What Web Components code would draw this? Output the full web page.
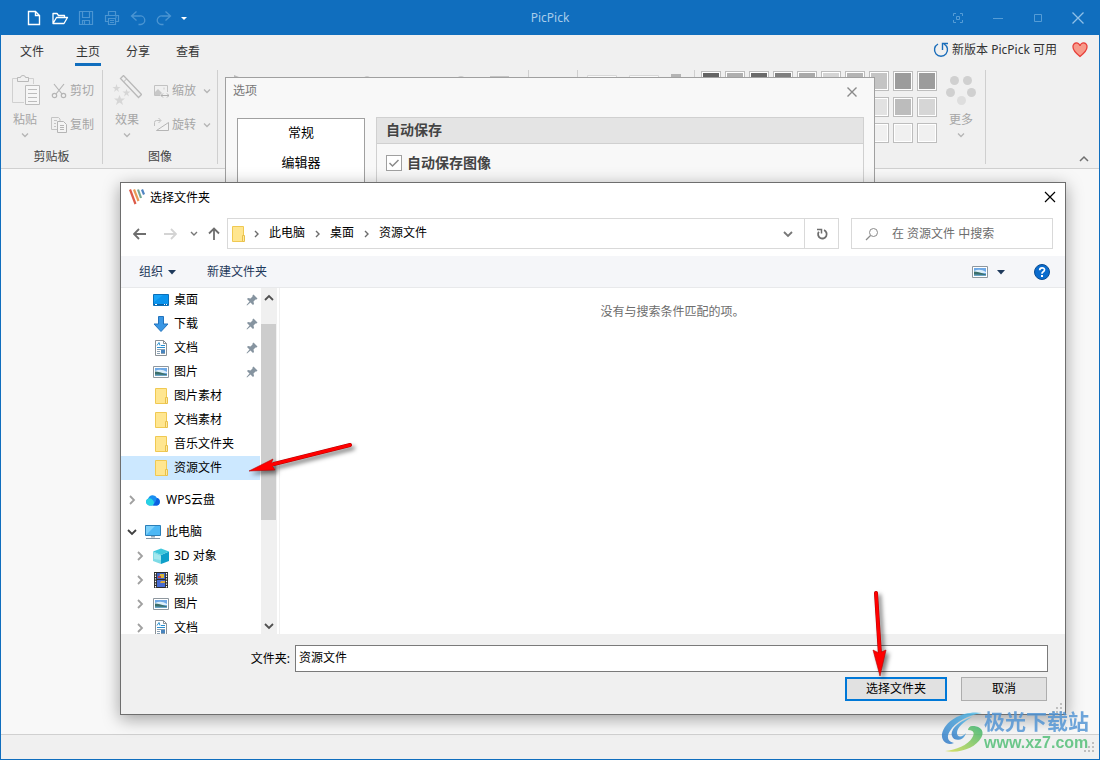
<!DOCTYPE html>
<html lang="zh-CN">
<head>
<meta charset="utf-8">
<title>PicPick</title>
<style>
  body { margin: 0; font: 12px/18px "Noto Sans", "Noto Sans CJK SC", sans-serif; color: #000; background: #f8f8f8; }
</style>
</head>
<body>
<picpick-app></picpick-app>
<script>
const BASE = `*{box-sizing:border-box} button{font:inherit;color:inherit;background:none;border:0;padding:0;margin:0} button:focus,input:focus{outline:none}`;
function component(name, css, html) {
  const tpl = document.createElement('template');
  tpl.innerHTML = `<style>${BASE}${css}</style>${html}`;
  customElements.define(name, class extends HTMLElement {
    constructor() {
      super();
      this.attachShadow({ mode: 'open' }).append(tpl.content.cloneNode(true));
    }
  });
}

/* Icon library: [width, height, svg body] */
const PICTURE = '<path d="M.5 2.5h15v11H.5z" fill="#fff" stroke="#8e979e"/><path d="M2 4h12v8H2z" fill="#6fa9e6"/><path d="M2 7q6-3 12 1v1H2z" fill="#dceefa"/><path d="M2 7.500q4 0 12 3v1.500H2z" fill="#3b6f6b"/><path d="M2 10.500q6 0 12 .5v1H2z" fill="#6aa5c8"/>';
const ICONS = {
  'new': [16,16,'<path d="M2.500 1.500h7l4 4v9h-11z M9.500 1.500v4h4" stroke="#fff" stroke-width="1.400" fill="none"/>'],
  'open': [18,16,'<path d="M2 13.500V3.500h4l1.500 2h6v2.500M2 13.500l3.500-6h11l-3.500 6z" stroke="#fff" stroke-width="1.300" fill="none" stroke-linejoin="round"/>'],
  'save': [16,16,'<path d="M1.500 1.500h13v13h-13z M4.500 1.500v6h7v-6 M4.500 14.500v-4h7v4M6.500 11v3" stroke="#4b95d2" stroke-width="1.200" fill="none"/>'],
  'print': [16,16,'<path d="M4.500 5V1.500h7V5M4.500 11.500h-3v-6h13v6h-3M4.500 8.500h7v6h-7zM6 10.500h4M6 12.500h4M11 7h2" stroke="#4b95d2" stroke-width="1.200" fill="none"/>'],
  'undo': [16,16,'<path d="M6.500 1.500l-5 4.500 5 4.500M1.500 6h8.500a4 4 0 0 1 1 8.500H8.500" stroke="#4b95d2" stroke-width="1.300" fill="none"/>'],
  'redo': [16,16,'<path d="M9.500 1.500l5 4.500-5 4.500M14.500 6H6a4 4 0 0 0-1 8.500h2.500" stroke="#4b95d2" stroke-width="1.300" fill="none"/>'],
  'caret-white': [8,8,'<path d="M1 3h6L4 6z" fill="#fff"/>'],
  'caret-navy': [8,8,'<path d="M0 2h8L4 6.500z" fill="#1e395b"/>'],
  'focus': [12,12,'<path d="M1.500 4V1.500H4M8 1.500h2.500V4M10.500 8v2.500H8M4 10.500H1.500V8" stroke="#559cd6" fill="none"/><path d="M4.500 4.500h3v3h-3z" stroke="#559cd6" fill="none"/>'],
  'min': [12,12,'<path d="M1 6.500h10" stroke="#559cd6"/>'],
  'max': [12,12,'<path d="M2.500 2.500h7v7h-7z" stroke="#559cd6" fill="none"/>'],
  'close-light': [12,12,'<path d="M.5.5l11 11M11.500.5l-11 11" stroke="#8fc0e8" stroke-width="1.300"/>'],
  'close-gray': [12,12,'<path d="M1.500 1.500l9 9M10.500 1.500l-9 9" stroke="#8a8a8a" stroke-width="1.400"/>'],
  'close': [12,12,'<path d="M1 1l10 10M11 1L1 11" stroke="#000" stroke-width="1.200"/>'],
  'update': [16,16,'<path d="M5 2a6.500 6.500 0 1 0 6 0M9.500 8V1.500H15" stroke="#1a6dba" stroke-width="1.400" fill="none"/>'],
  'heart': [16,16,'<path d="M8 14.500C3 10.500 1 8 1 5a3.500 3.500 0 0 1 7-1 3.500 3.500 0 0 1 7 1c0 3-2 5.500-7 9.500z" fill="#f79a8a" stroke="#e8413c" stroke-width="1.300"/>'],
  'paste': [30,30,'<path d="M7 3.500H2.500v24H14M19 3.500h4.500V9" stroke="#d0d0d0" fill="none"/><path d="M7.500 6.500v-4h3q0-2 2.500-2t2.500 2h3v4z" stroke="#b9b9b9" fill="#f0f0f0"/><path d="M15.500 10.500h14v19h-14z" stroke="#bcbcbc" fill="#f6f6f6"/><path d="M18 14.500h9M18 18.500h9M18 22.500h9M18 26.500h9" stroke="#bcbcbc"/>'],
  'effects': [30,30,'<g stroke="#b9b9b9" fill="none"><path d="M8.500 3.500l3-3 18 19-3 3z" stroke-width="1.300"/><path d="M11.500 7l3-3"/></g><path fill="#d6d6d6" d="M4.500 9l1 3h3L6 14l1 3-2.500-2L2 17l1-3L.5 12h3zM14.500 14l1 2.500h3l-2.500 2 1 3-2.500-2-2.500 2 1-3-2.500-2h3zM7.500 20L9 23.500h4L9.800 26l1.200 4-3.500-2.500L4 30l1.200-4L2 23.500h4z"/>'],
  'cut': [16,16,'<g stroke="#b5b5b5" fill="none" stroke-width="1.200"><circle cx="3.500" cy="12.500" r="2.200"/><circle cx="12.500" cy="12.500" r="2.200"/><path d="M3 1l8 10M13 1L5 11"/></g>'],
  'copy': [16,16,'<path d="M7 12.500H.5v-12h7L9 2v2M3 3.500h3M3 6.500h2M3 9.500h2" stroke="#c4c4c4" fill="none"/><path d="M6.500 4.500h6l3 3v8h-9zM9 8.500h4M9 10.500h4M9 12.500h4" stroke="#b5b5b5" fill="#f4f4f4"/>'],
  'resize': [16,16,'<path d="M7 12.500H1.500v-10h13V9" stroke="#c2c2c2" fill="none"/><path d="M2 12V9l3-3 4 4-2 2z" fill="#c8c8c8"/><path d="M10 4.500h2v2h-2z" fill="#ddd"/><path d="M8 12.500h8M10 10.500l-2 2 2 2M14 10.500l2 2-2 2" stroke="#b0b0b0" fill="none"/>'],
  'rotate': [16,16,'<path d="M3.500 13.500h12V5.500z" stroke="#b5b5b5" fill="#f2f2f2"/><path d="M1.500 9V5.500q0-2 2-2h4M5.500 1l2.500 2.500L5.500 6" stroke="#c0c0c0" fill="none"/>'],
  'chevron-small': [8,8,'<path d="M1 2.500l3 3 3-3" stroke="#b5b5b5" fill="none" stroke-width="1.300"/>'],
  'collapse': [12,12,'<path d="M2 8l4-4 4 4" stroke="#6f6f6f" fill="none" stroke-width="1.500"/>'],
  'more-dots': [30,30,'<g fill="#d0d0d0"><circle cx="8.500" cy="5.500" r="4.500"/><circle cx="21.500" cy="5.500" r="4.500"/><circle cx="4.500" cy="17.500" r="4.500"/><circle cx="25.500" cy="17.500" r="4.500"/><circle cx="15.500" cy="25.500" r="4.500" fill="#dedede"/></g>'],
  'picpick': [16,16,'<g stroke-width="2.200"><path d="M1 .5l5.500 14.500" stroke="#dc5a48"/><path d="M5 .5l4.500 11.500" stroke="#e99a55"/><path d="M9 .5l3 8.500" stroke="#74a893"/><path d="M13 .5l2 5" stroke="#4f84c2"/></g>'],
  'back': [14,14,'<path d="M13 7H1.500M6 2L1 7l5 5" stroke="#6e6e6e" fill="none" stroke-width="1.800"/>'],
  'forward': [14,14,'<path d="M1 7h11.500M8 2l5 5-5 5" stroke="#d4d4d4" fill="none" stroke-width="1.800"/>'],
  'up': [14,14,'<path d="M7 13V1.500M2 6.500l5-5 5 5" stroke="#6e6e6e" fill="none" stroke-width="1.800"/>'],
  'down-tiny': [8,8,'<path d="M1 2l3 3 3-3" stroke="#777" fill="none" stroke-width="1.400"/>'],
  'down': [10,10,'<path d="M1 3l4 4 4-4" stroke="#777" fill="none" stroke-width="1.800"/>'],
  'crumb': [8,10,'<path d="M2 2l3 3-3 3" stroke="#6c6c6c" fill="none" stroke-width="1.400"/>'],
  'refresh': [14,14,'<path d="M9 3.200a4.300 4.300 0 1 1-5.200 1.600" stroke="#6e6e6e" fill="none" stroke-width="1.800"/><path d="M2 2.500h4.500v4" stroke="#6e6e6e" fill="none" stroke-width="1.500"/>'],
  'search': [14,14,'<circle cx="8.500" cy="5.500" r="4" stroke="#8a8a8a" fill="none"/><path d="M5.500 8.500L1 13" stroke="#8a8a8a" stroke-width="1.200"/>'],
  'folder': [16,16,'<path d="M2.500.5h11v15h-11z" fill="#ffe690" stroke="#f0c952"/><path d="M12.500 9.500h2v6h-2z" fill="#ffe9a0" stroke="#e8c04a"/>'],
  'desktop': [16,16,'<path d="M.5 2.500h15v11H.5z" fill="#18a4f8" stroke="#0b6fb8"/><path d="M1 10l9-7h5v10H1z" fill="#0a94ee"/><path d="M1 12.500h14" stroke="#0a5fa4"/><path d="M2 12.500h2M11 12.500h1M13 12.500h1" stroke="#fff"/>'],
  'download': [16,16,'<path d="M5.500.5h5V8H15L8 15.500 1 8h4.500z" fill="#3a97e4" stroke="#2273bd"/>'],
  'document': [16,16,'<path d="M2.500.5h8l3 3v12h-11z" fill="#fff" stroke="#8a9196"/><path d="M10.500.5v3h3" fill="none" stroke="#8a9196"/><path d="M4 9.500h8M4 11.500h3M4 13.500h3M8 13.500h4" stroke="#8aa0b2"/><path d="M4 5.500l2-3 1 3M8 5.500h4M4 7.500h8" stroke="#2a8fd0" fill="none"/><path d="M8 10h4v3H8z" fill="#4884bd"/>'],
  'picture': [16,16,PICTURE],
  'pin': [12,12,'<path d="M7.500.5l4 4-1 1h-1L7.500 7.500 8 10l-1 1-2.500-2.500L1 11.500.5 11l3-3.500L1 5l1-1 2.500.5 2-2v-1z" fill="#8694a0"/>'],
  'cloud': [16,16,'<path d="M4 13.500a3.700 3.700 0 0 1-.8-7A4.700 4.700 0 0 1 12 6 3.900 3.900 0 0 1 12 13.500z" fill="#1a8ff2"/><path d="M4 13.500a3.700 3.700 0 0 1-.8-7q3-1 5 2t-1 5z" fill="#27d3e3"/><path d="M8 13.500q3-4 4-7.500A3.900 3.900 0 0 1 12 13.500z" fill="#0b5fe0"/>'],
  'computer': [16,16,'<path d="M.5 1.500h15v10H.5z" fill="#4db8f5" stroke="#2b7fb8"/><path d="M1 11V2h9z" fill="#7cd0fa"/><path d="M6 12h4v1.500H6z" fill="#9aaab8"/><path d="M1 14.500h14" stroke="#8496a6"/>'],
  'cube': [16,16,'<path d="M0 3.500L8 7v9l-8-3z" fill="#7edbe6"/><path d="M16 3.500L8 7v9l8-3z" fill="#0e9fc9"/><path d="M0 3.500L8 .5l8 3L8 7z" fill="#3fc8dc"/><path d="M1 5l7 3v4L1 11z" fill="#a5e8ee"/>'],
  'video': [16,16,'<path d="M1 0h14v16H1z" fill="#2b2b2b"/><path d="M4 1h8v6H4z" fill="#3f63c8"/><path d="M4 8h8v7H4z" fill="#466bd2"/><path d="M7 2h4v4H6z" fill="#d7b83b"/><path d="M5 4h3v2H5z" fill="#c4404a"/><path d="M8 9h4v2H7z" fill="#d8a63a"/><path d="M2.500 1v15M13.500 1v15" stroke="#fff" stroke-width="1.200" stroke-dasharray="1.400 1.200"/>'],
  'tree-closed': [8,12,'<path d="M2 2l4 4-4 4" stroke="#a0a0a0" fill="none" stroke-width="1.800"/>'],
  'tree-open': [10,10,'<path d="M1 3l4 4 4-4" stroke="#404040" fill="none" stroke-width="1.800"/>'],
  'scroll-up': [10,10,'<path d="M1 7l4-4 4 4" stroke="#505050" fill="none" stroke-width="1.800"/>'],
  'scroll-down': [10,10,'<path d="M1 3l4 4 4-4" stroke="#505050" fill="none" stroke-width="1.800"/>'],
  'help': [16,16,'<circle cx="8" cy="8" r="7.500" fill="#0a6cce" stroke="#0b4d92"/><path d="M5.700 6.200q0-2.400 2.400-2.400t2.400 2q0 1.200-1.300 2T8 9.800" stroke="#fff" stroke-width="1.700" fill="none"/><path d="M7 11h2v2H7z" fill="#fff"/>'],
  'grip': [12,12,'<path d="M8 0h2v2H8zM4 4h2v2H4zM8 4h2v2H8zM0 8h2v2H0zM4 8h2v2H4zM8 8h2v2H8z" fill="#bfbfbf"/>']
};
customElements.define('pp-icon', class extends HTMLElement {
  constructor() { super(); this.attachShadow({ mode: 'open' }); }
  connectedCallback() {
    const [w, h, body] = ICONS[this.getAttribute('name')];
    this.shadowRoot.innerHTML = `<style>:host{display:block;flex:none;width:${w}px;height:${h}px}svg{display:block}</style><svg width="${w}" height="${h}" viewBox="0 0 ${w} ${h}" aria-hidden="true">${body}</svg>`;
  }
});
const icon = n => `<pp-icon name="${n}"></pp-icon>`;

component('title-bar', `
  :host{display:grid;grid-template-columns:1fr auto 1fr;align-items:center;height:35px;background:#106ebe;color:#a9cdea}
  .quick{display:flex;padding-left:20px}
  .quick button{width:26px;height:34px;display:grid;place-items:center}
  .quick button:last-child{width:14px}
  .win{display:flex;justify-content:flex-end;padding-right:1px}
  .win button{width:40px;height:34px;display:grid;place-items:center}
`, `<div class="quick">${[['new','新建'],['open','打开'],['save','保存'],['print','打印'],['undo','撤销'],['redo','重做'],['caret-white','自定义']].map(([n,t]) => `<button aria-label="${t}">${icon(n)}</button>`).join('')}</div>
<span><slot></slot></span>
<div class="win">${[['focus','专注'],['min','最小化'],['max','最大化'],['close-light','关闭']].map(([n,t]) => `<button aria-label="${t}">${icon(n)}</button>`).join('')}</div>`);

component('ribbon-tabs', `
  :host{display:flex;height:35px;color:#333}
  nav{display:flex;flex:1;padding-left:6px}
  nav a{display:block;margin:8px 12px 4px;padding:0 1px;line-height:18px;height:23px;color:#333;text-decoration:none;border-bottom:3px solid transparent}
  nav a:first-child{margin-right:18px}
  nav a[aria-current]{border-color:#106ebe}
  .notice{display:flex;align-items:center;gap:3px;padding:0 11px 5px 0}
  .notice span{margin-right:12px}
`, `<nav><a href="#file">文件</a><a href="#home" aria-current="page">主页</a><a href="#share">分享</a><a href="#view">查看</a></nav>
<div class="notice">${icon('update')}<span>新版本 PicPick 可用</span>${icon('heart')}</div>`);

component('ribbon-group', `
  :host{display:flex;flex-direction:column;flex:none;height:94px;border-right:1px solid #cfcfcf;color:#444}
  .body{display:flex;flex:1}
  .caption{height:14px;line-height:14px;text-align:center}
`, `<div class="body"><slot></slot></div><div class="caption"><slot name="caption"></slot></div>`);

component('ribbon-large', `
  :host{display:block;flex:none;width:48px;color:#a6a6a6}
  button{display:flex;flex-direction:column;align-items:center;width:100%;padding-top:5px}
  .label{margin:6px 0 2px;height:18px}
`, `<button><slot name="icon"></slot><span class="label"><slot></slot></span>${icon('chevron-small')}</button>`);

component('ribbon-small', `
  :host{display:block;color:#a6a6a6}
  button{display:flex;align-items:center;gap:3px;height:34px}
`, `<button><slot name="icon"></slot><slot></slot><slot name="more"></slot></button>`);

const ROWS = ['#646464 #afafaf #6a6a6a #7f7f7f #a9a9a9 #d4d4d4 #b4b4b4 #c4c4c4 #9c9c9c #9c9c9c',
  '#eee #ccc #ddd #ccc #ddd #e4e4e4 #ddd #e2e2e2 #bcbcbc #d6d6d6',
  Array(10).fill('#f0f0f0').join(' ')].join(' ').split(' ');
component('color-palette', `
  :host{display:grid;grid-template-columns:repeat(10,20px);grid-auto-rows:20px;gap:6px 4px;padding:1px 0 0 6px}
  button{border:1px solid #bdbdbd;box-shadow:inset 0 0 0 1px #fff}
`, ROWS.map(c => `<button aria-label="${c}" style="background:${c}"></button>`).join(''));

component('ribbon-bar', `
  :host{display:block;background:#f0f0f0;border-bottom:1px solid #d0d0d0}
  .groups{display:flex;height:98px}
  .col{display:flex;flex-direction:column;padding:4px 7px 0 2px}
  .col.first{padding-right:8px}
  .col.second{padding-right:6px}
  .more{margin-left:4px}
  .peek{display:block;height:20px}
  .draw{width:311px}.line{width:49px}.size{width:117px}
  .fold{margin:auto 9px 3px auto;height:12px}
`, `<ribbon-tabs></ribbon-tabs>
<div class="groups">
  <ribbon-group><ribbon-large><pp-icon slot="icon" name="paste"></pp-icon>粘贴</ribbon-large>
    <div class="col first"><ribbon-small><pp-icon slot="icon" name="cut"></pp-icon>剪切</ribbon-small><ribbon-small><pp-icon slot="icon" name="copy"></pp-icon>复制</ribbon-small></div>
    <span slot="caption">剪贴板</span></ribbon-group>
  <ribbon-group><ribbon-large><pp-icon slot="icon" name="effects"></pp-icon>效果</ribbon-large>
    <div class="col second"><ribbon-small><pp-icon slot="icon" name="resize"></pp-icon>缩放<pp-icon class="more" slot="more" name="chevron-small"></pp-icon></ribbon-small><ribbon-small><pp-icon slot="icon" name="rotate"></pp-icon>旋转<pp-icon class="more" slot="more" name="chevron-small"></pp-icon></ribbon-small></div>
    <span slot="caption">图像</span></ribbon-group>
  <ribbon-group class="draw"><svg class="peek" width="300" height="20" aria-hidden="true"><path d="M16 5v14l10-10z" fill="#bbb"/><circle cx="149" cy="9" r="3" fill="#ccc"/><circle cx="243" cy="10" r="4" fill="#ccc"/><path d="M272 6h19v6h-19z" fill="#c4c4c4"/></svg></ribbon-group>
  <ribbon-group class="line"></ribbon-group>
  <ribbon-group class="size"><svg class="peek" width="110" height="20" aria-hidden="true"><path d="M9.500 5.500h29v14h-29zM51.500 5.500h29v14h-29z" fill="#fafafa" stroke="#d8d8d8"/><path d="M93 4h10v14H93z" fill="#b4b4b4"/></svg></ribbon-group>
  <ribbon-group><color-palette></color-palette><ribbon-large><pp-icon slot="icon" name="more-dots"></pp-icon>更多</ribbon-large></ribbon-group>
  <button class="fold" aria-label="折叠功能区">${icon('collapse')}</button>
</div>`);

component('options-dialog', `
  :host{display:flex;flex-direction:column;background:#f8f8f8;border:1px solid #a0a0a0;color:#444}
  header{display:flex;justify-content:space-between;align-items:center;height:28px;padding:0 16px 0 7px;color:#777}
  header span{line-height:16px;height:18px}
  main{display:flex;align-items:stretch;flex:1;gap:11px;padding:12px 10px 10px 11px}
  ul{list-style:none;margin:0;padding:0;width:128px;border:1px solid #a0a0a0;background:#fff;color:#000;font-size:13px;text-align:center}
  li{height:30px;line-height:26px}
  section{flex:1;margin-top:-1px;border:1px solid #d0d0d0}
  h2{margin:0;height:26px;line-height:24px;padding-left:9px;font-size:14px;font-weight:bold;background:#e4e4e4;border-bottom:1px solid #d0d0d0}
  label{display:flex;align-items:center;gap:5px;padding:11px 9px;font-size:14px;font-weight:bold;line-height:16px}
  input{appearance:none;margin:0;width:16px;height:16px;border:1px solid #a0a0a0;background:#fff}
  .box{display:grid}
  .box>*{grid-area:1/1}
`, `<header><span>选项</span><button aria-label="关闭">${icon('close-gray')}</button></header>
<main><ul><li>常规</li><li>编辑器</li></ul>
<section><h2>自动保存</h2><label><span class="box"><input type="checkbox" checked><svg width="16" height="16" aria-hidden="true"><path d="M3.500 8l3 3 6-6" fill="none" stroke="#8a8a8a" stroke-width="1.500"/></svg></span>自动保存图像</label></section></main>`);

component('address-bar', `
  :host{display:flex;align-items:center;height:31px;padding-right:12px}
  .nav{display:flex;align-items:center;width:106px;padding-left:12px}
  .nav button{display:grid;place-items:center;height:28px}
  .forward{margin-left:16px}
  .nav .recent{margin:0 9px 0 13px}
  .path{display:flex;align-items:center;flex:1;height:31px;border:1px solid #d9d9d9;padding-left:2px}
  .path .sep{margin:0 8px 0 9px}
  .path .first{margin-left:7px}
  .path a{color:#000;text-decoration:none;height:20px}
  .path .drop{margin-left:auto;width:32px;height:29px;display:grid;place-items:center}
  .reload{width:34px;height:29px;border-left:1px solid #d9d9d9;display:grid;place-items:center}
  .search{display:flex;align-items:center;gap:13px;width:202px;height:31px;margin-left:12px;border:1px solid #d9d9d9;padding-left:13px}
  input{font:inherit;border:0;padding:0;width:140px;background:none}
  input::placeholder{color:#6d6d6d;opacity:1}
`, `<div class="nav"><button aria-label="后退">${icon('back')}</button><button aria-label="前进" class="forward">${icon('forward')}</button><button aria-label="最近" class="recent">${icon('down-tiny')}</button><button aria-label="向上">${icon('up')}</button></div>
<div class="path">${icon('folder')}<pp-icon class="sep first" name="crumb"></pp-icon><a href="#pc">此电脑</a><pp-icon class="sep" name="crumb"></pp-icon><a href="#desk">桌面</a><pp-icon class="sep" name="crumb"></pp-icon><a href="#res">资源文件</a><button class="drop" aria-label="展开">${icon('down')}</button><button class="reload" aria-label="刷新">${icon('refresh')}</button></div>
<label class="search">${icon('search')}<input type="text" placeholder="在 资源文件 中搜索" aria-label="搜索"></label>`);

component('tree-item', `
  :host{display:flex;align-items:center;height:24px;padding-right:2px}
  :host([nested]){padding-left:8px}
  :host([selected]){background:#cce8ff}
  :host([spaced]){margin-top:8px}
  .twist{display:grid;place-items:center;width:21px;margin-right:3px}
  .label{flex:1;padding-left:5px;line-height:12px;white-space:nowrap}
`, `<span class="twist"><slot name="twist"></slot></span><slot name="icon"></slot><span class="label"><slot></slot></span><slot name="pin"></slot>`);

const item = (text, ic, o = {}) => `<tree-item ${o.top ? '' : 'nested'} ${o.sel ? 'selected' : ''} ${o.top ? 'spaced' : ''}>${o.twist ? `<pp-icon slot="twist" name="tree-${o.twist}"></pp-icon>` : ''}<pp-icon slot="icon" name="${ic}"></pp-icon>${text}${o.pin ? '<pp-icon slot="pin" name="pin"></pp-icon>' : ''}</tree-item>`;

component('folder-tree', `
  :host{display:flex;flex:none;width:159px;overflow:hidden;border-right:1px solid #f0f0f0}
  .items{width:139px;margin-right:1px;overflow:hidden}
  .bar{width:16px;background:#f0f0f0;display:flex;flex-direction:column;align-items:center;padding:5px 1px 3px 0}
  .track{flex:1;align-self:stretch;display:grid;grid-template-rows:21px 196px 1fr}
  .thumb{grid-row:2;width:15px;background:#cdcdcd}
`, `<div class="items">
${item('桌面','desktop',{pin:1})}${item('下载','download',{pin:1})}${item('文档','document',{pin:1})}${item('图片','picture',{pin:1})}
${item('图片素材','folder')}${item('文档素材','folder')}${item('音乐文件夹','folder')}${item('资源文件','folder',{sel:1})}
${item('WPS云盘','cloud',{top:1,twist:'closed'})}${item('此电脑','computer',{top:1,twist:'open'})}
${item('3D 对象','cube',{twist:'closed'})}${item('视频','video',{twist:'closed'})}${item('图片','picture',{twist:'closed'})}${item('文档','document',{twist:'closed'})}
</div><div class="bar">${icon('scroll-up')}<div class="track"><div class="thumb"></div></div>${icon('scroll-down')}</div>`);

component('push-button', `
  :host{display:block;width:86px}
  button{display:block;width:100%;height:24px;line-height:20px;background:#e1e1e1;border:1px solid #adadad;text-align:center}
  :host([primary]){width:102px}
  :host([primary]) button{border:2px solid #0078d7;line-height:18px}
`, `<button><slot></slot></button>`);

component('folder-dialog', `
  :host{display:flex;flex-direction:column;background:#fff;border:1px solid #6e6e6e;box-shadow:0 4px 16px rgba(0,0,0,.36)}
  header{display:flex;align-items:center;gap:5px;height:28px;margin-bottom:7px;padding:0 9px 0 8px}
  header span{padding-top:2px}
  header button{margin-left:auto}
  .tools{display:flex;align-items:center;height:32px;margin-top:7px;padding:0 15px 0 18px;background:#f5f6f9;border-bottom:1px solid #e8e9eb;color:#1e395b}
  .tools button{display:flex;align-items:center;gap:5px}
  .create{margin-left:31px}
  .tools .view{gap:9px;margin-left:auto;margin-right:29px}
  .body{display:flex;flex:1;min-height:0}
  .empty{flex:1;margin:0;padding-top:15px;text-align:center;color:#6d6d6d}
  footer{flex:none;height:80px;background:#f0f0f0;padding:11px 17px 0 0}
  .field{display:flex;align-items:center}
  label{width:169px;margin-right:5px;text-align:right}
  input{flex:1;font:inherit;height:27px;border:1px solid #7a7a7a;background:#fff;padding:0 3px 3px}
  .actions{display:flex;justify-content:flex-end;gap:14px;padding:5px 1px 0 0}
  .grip{display:flex;justify-content:flex-end;height:8px;margin:2px -16px 0 0}
`, `<header>${icon('picpick')}<span>选择文件夹</span><button aria-label="关闭">${icon('close')}</button></header>
<address-bar></address-bar>
<div class="tools"><button>组织${icon('caret-navy')}</button><button class="create">新建文件夹</button><button class="view" aria-label="视图">${icon('picture')}${icon('caret-navy')}</button><button aria-label="帮助">${icon('help')}</button></div>
<div class="body"><folder-tree></folder-tree><p class="empty">没有与搜索条件匹配的项。</p></div>
<footer><div class="field"><label for="folder">文件夹:</label><input id="folder" type="text" value="资源文件"></div>
<div class="actions"><push-button primary>选择文件夹</push-button><push-button>取消</push-button></div><div class="grip">${icon('grip')}</div></footer>`);

component('pointer-arrow', `
  :host{display:block;filter:drop-shadow(3px 3px 2px rgba(0,0,0,.5));pointer-events:none}
  svg{display:none}
  :host([to="left"]) .left,:host([to="down"]) .down{display:block}
`, `<svg class="left" width="108" height="36" aria-hidden="true"><path d="M26 22L102 3" stroke="#b30000" stroke-width="4" stroke-linecap="round"/><path d="M1 29L25 17l-2 5 4 6z" fill="#f00" stroke="#b30000" stroke-width=".6"/><path d="M22 23L102 3" stroke="#f00" stroke-width="3" stroke-linecap="round"/></svg>
<svg class="down" width="20" height="90" aria-hidden="true"><path d="M5 3l4 62" stroke="#b30000" stroke-width="4" stroke-linecap="round"/><path d="M9 86L2 60l6 3 7-3z" fill="#f00" stroke="#b30000" stroke-width=".6"/><path d="M5 3l4 62" stroke="#f00" stroke-width="3" stroke-linecap="round"/></svg>`);

component('site-mark', `
  :host{display:flex;align-items:center;gap:1px;pointer-events:none;opacity:.82}
  svg{display:block;flex:none}
  .name{font-size:21px;line-height:23px;font-weight:bold;color:#4f93d4;white-space:nowrap}
  .url{font:bold 16px/20px "Liberation Sans",sans-serif;color:#4fbe74}
`, `<svg width="42" height="42" viewBox="0 0 42 42" aria-hidden="true">
<defs><linearGradient id="b" x1="0" y1="1" x2="1" y2="0"><stop offset="0" stop-color="#2c74c4"/><stop offset="1" stop-color="#56c4ee"/></linearGradient><linearGradient id="g" x1="0" y1="1" x2="1" y2="0"><stop offset="0" stop-color="#d8e04a"/><stop offset="1" stop-color="#2fb06b"/></linearGradient></defs>
<path d="M41 2C25-1 4 8 1 23c-1 7 5 12 12 9-6-1-8-6-4-12C14 11 27 4 41 2z" fill="url(#b)"/>
<path d="M31 6C18 10 9 18 11 25c2 6 12 5 14-3-3 4-9 5-9 0 0-5 6-11 15-16z" fill="url(#b)"/>
<path d="M31 15c9 0 13 5 9 12C35 36 20 43 4 40c11-1 23-6 27-13 3-5 2-8-4-8 0-2 2-4 4-4z" fill="url(#g)"/></svg>
<div><div class="name">极光下载站</div><div class="url">www.xz7.com</div></div>`);

component('picpick-app', `
  :host{display:flex;flex-direction:column;position:relative;min-height:100vh;background:#f8f8f8;border:1px solid #106ebe;border-top:0;box-sizing:border-box;overflow:hidden}
  .canvas{flex:1}
  .status{display:flex;justify-content:flex-end;height:25px;padding:7px 3px 0;background:#f0f0f0;border-top:1px solid #d0d0d0}
  options-dialog,folder-dialog,pointer-arrow,site-mark{position:absolute}
  options-dialog{top:77px;left:224px;right:224px;height:420px}
  folder-dialog{top:182px;left:119px;right:33px;bottom:44px}
  .a1{left:247px;top:442px}
  .a2{right:208px;bottom:79px}
  site-mark{right:10px;bottom:6px}
`, `<title-bar>PicPick</title-bar><ribbon-bar></ribbon-bar><div class="canvas"></div><div class="status">${icon('grip')}</div>
<options-dialog></options-dialog><folder-dialog></folder-dialog>
<pointer-arrow class="a1" to="left"></pointer-arrow><pointer-arrow class="a2" to="down"></pointer-arrow>
<site-mark></site-mark>`);
</script>
</body>
</html>
